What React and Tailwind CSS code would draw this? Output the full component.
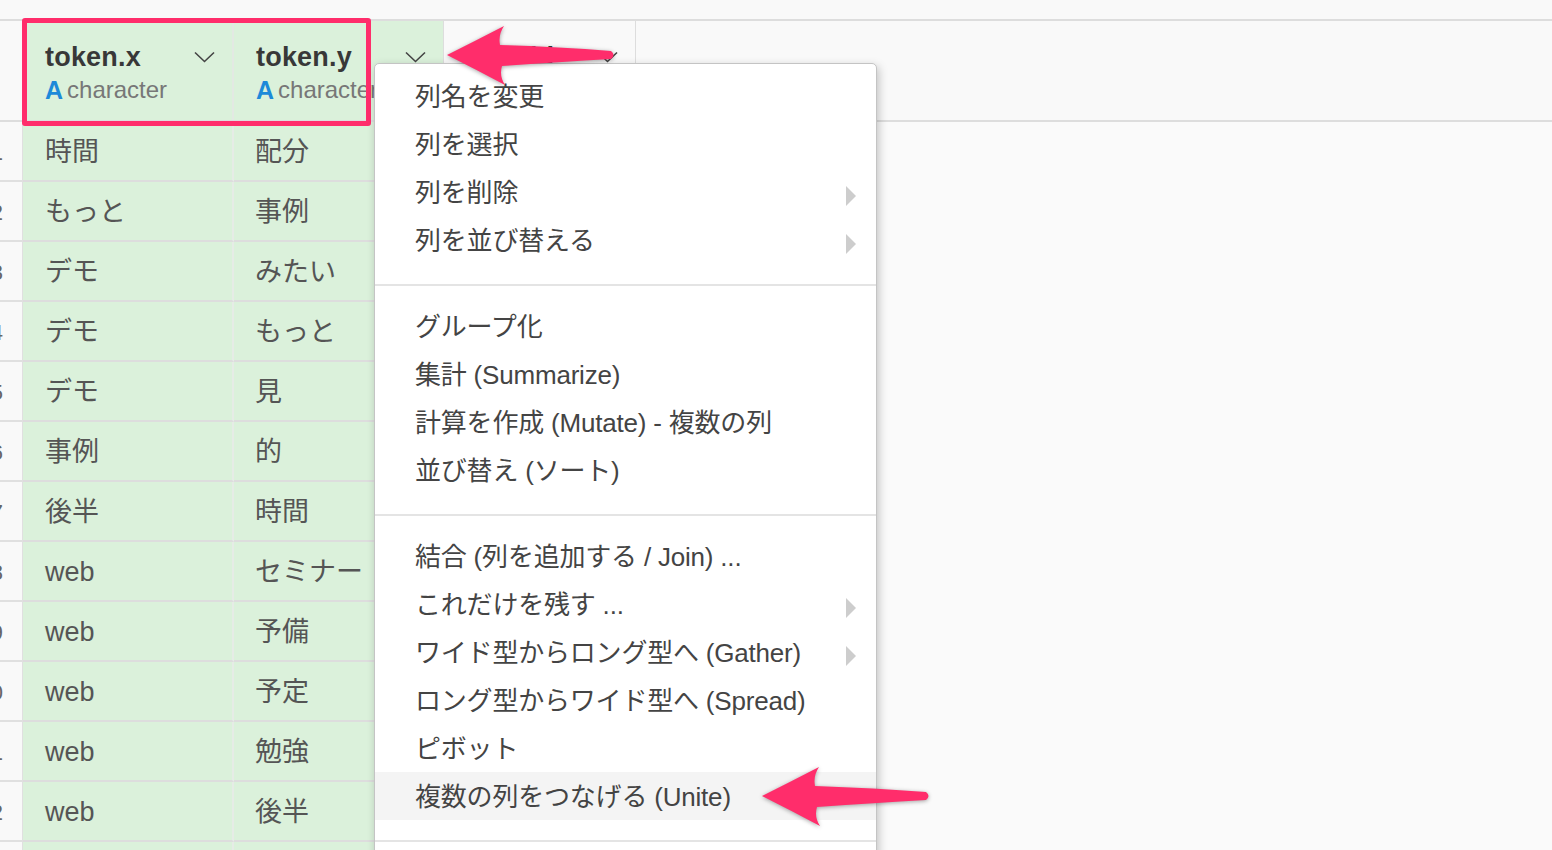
import React from 'react';

const rows = [
  ['時間', '配分'],
  ['もっと', '事例'],
  ['デモ', 'みたい'],
  ['デモ', 'もっと'],
  ['デモ', '見'],
  ['事例', '的'],
  ['後半', '時間'],
  ['web', 'セミナー'],
  ['web', '予備'],
  ['web', '予定'],
  ['web', '勉強'],
  ['web', '後半'],
  ['web', '資料'],
];

const menuGroups = [
  {
    pad: 'pt-[8px] pb-[20px]',
    items: [
      { label: '列名を変更' },
      { label: '列を選択' },
      { label: '列を削除', sub: true },
      { label: '列を並び替える', sub: true },
    ],
  },
  {
    pad: 'pt-[16px] pb-[20px]',
    items: [
      { label: 'グループ化' },
      { label: '集計 (Summarize)' },
      { label: '計算を作成 (Mutate) - 複数の列' },
      { label: '並び替え (ソート)' },
    ],
  },
  {
    pad: 'pt-[16px] pb-[20px]',
    items: [
      { label: '結合 (列を追加する / Join) ...' },
      { label: 'これだけを残す ...', sub: true },
      { label: 'ワイド型からロング型へ (Gather)', sub: true },
      { label: 'ロング型からワイド型へ (Spread)' },
      { label: 'ピボット' },
      { label: '複数の列をつなげる (Unite)', active: true },
    ],
  },
  {
    pad: 'pt-[16px] pb-[20px]',
    items: [{ label: '' }],
  },
];

function Chevron() {
  return (
    <svg width="21" height="12" viewBox="0 0 21 12" className="shrink-0">
      <polyline points="1,1.5 10.5,10.5 20,1.5" fill="none" stroke="#444" strokeWidth="1.6" />
    </svg>
  );
}

function HeaderCell({ name, width, bg, border, showType = true }) {
  return (
    <div className={`${width} ${bg} ${border} h-full pl-[22px] pr-[17px] pt-[20px] shrink-0`}>
      <div className="flex items-center justify-between leading-[32px]">
        <span className="text-[27px] font-bold text-[#383838] whitespace-nowrap tracking-[0.2px]">{name}</span>
        <Chevron />
      </div>
      {showType && (
        <div className="flex items-center leading-[34px] whitespace-nowrap overflow-hidden">
          <span className="text-[25px] font-bold text-[#1d8ad9] mr-[4px]">A</span>
          <span className="text-[24px] text-[#777]">character</span>
        </div>
      )}
    </div>
  );
}

function Arrow({ className }) {
  return (
    <svg width="180" height="72" viewBox="0 0 180 72" className={`absolute drop-shadow-[0_1px_2px_rgba(0,0,0,0.35)] ${className}`}>
      <path
        d="M7 36 Q35 22 64 7 Q58 16 60 26 Q120 28 171 32 Q176 36 171 40 Q120 43 62 47 Q59 57 65 66 Q35 50 7 36 Z"
        fill="#ff2d6b"
      />
    </svg>
  );
}

export default function App() {
  return (
    <div className="relative w-[1552px] h-[850px] overflow-hidden bg-[#fafafa] font-['Liberation_Sans','Noto_Sans_CJK_JP',sans-serif]">
      {/* top strip */}
      <div className="h-[21px] border-b-2 border-[#dddddd] bg-[#f9f9f9]" />

      {/* header row */}
      <div className="flex h-[101px] border-b-2 border-[#dddddd] bg-[#f9f9f9]">
        <div className="w-[23px] h-full border-r border-[#e4e4e4] shrink-0" />
        <HeaderCell name="token.x" width="w-[211px]" bg="bg-[#dbf1db]" border="border-r-2 border-[#e3e9e3]" />
        <HeaderCell name="token.y" width="w-[210px]" bg="bg-[#dbf1db]" border="border-r border-[#dddddd]" />
        <HeaderCell name="doc_id" width="w-[192px]" bg="bg-[#f9f9f9]" border="border-r border-[#dddddd]" showType={false} />
        <div className="flex-1" />
      </div>

      {/* data rows */}
      {rows.map((r, i) => (
        <div key={i} className="flex h-[60px]">
          <div className="w-[23px] h-full shrink-0 overflow-hidden border-b-2 border-r border-[#e0e0e0] bg-[#f9f9f9] flex items-center justify-end pr-[19px] pt-[2px] text-[22px] text-[#666]">
            {i + 1}
          </div>
          <div className="w-[211px] h-full shrink-0 bg-[#dbf1db] border-b-2 border-r-2 border-b-[#dddddd] border-r-[#e6ece6] flex items-center pl-[22px] pt-[3px] text-[27px] text-[#555] whitespace-nowrap">
            {r[0]}
          </div>
          <div className="w-[210px] h-full shrink-0 bg-[#dbf1db] border-b-2 border-[#dddddd] flex items-center pl-[21px] pt-[3px] text-[27px] text-[#555] whitespace-nowrap">
            {r[1]}
          </div>
          <div className="w-[192px] h-full shrink-0 border-b-2 border-[#dddddd]" />
        </div>
      ))}

      {/* highlight box around the two token columns */}
      <div className="absolute left-[22px] top-[18px] w-[349px] h-[108px] border-[5px] border-[#ff2d6b] rounded-[3px]" />

      {/* column menu */}
      <div className="absolute left-[374px] top-[63px] w-[503px] bg-white border border-[#c4c4c4] rounded-t-[5px] shadow-[2px_3px_10px_rgba(0,0,0,0.22)]">
        {menuGroups.map((g, gi) => (
          <div key={gi} className={`${g.pad} ${gi > 0 ? 'border-t-2 border-[#e4e4e4]' : ''}`}>
            {g.items.map((it, ii) => (
              <div
                key={ii}
                className={`flex items-center justify-between h-[48px] pl-[40px] pr-[20px] pt-[2px] text-[26px] text-[#444] whitespace-nowrap tracking-[-0.2px] ${it.active ? 'bg-[#f4f4f4]' : ''}`}
              >
                <span>{it.label}</span>
                {it.sub && (
                  <svg width="10" height="20" viewBox="0 0 10 20" className="mt-[6px] shrink-0">
                    <path d="M0 0 L10 10 L0 20 Z" fill="#cdcdcd" />
                  </svg>
                )}
              </div>
            ))}
          </div>
        ))}
      </div>

      {/* annotation arrows */}
      <Arrow className="left-[440px] top-[19px]" />
      <Arrow className="left-[755px] top-[760px]" />
    </div>
  );
}
